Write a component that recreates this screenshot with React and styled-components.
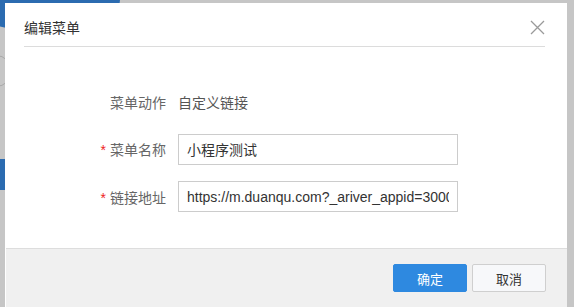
import React from "react";
import styled, { createGlobalStyle } from "styled-components";

const Global = createGlobalStyle`
  html, body { margin: 0; padding: 0; }
  body {
    width: 574px; height: 307px; overflow: hidden;
    font-family: "Liberation Sans", "Noto Sans CJK SC", Arial, sans-serif;
    background: #c6c6c6;
  }
`;

const Backdrop = styled.div`
  position: relative;
  width: 574px;
  height: 307px;
  overflow: hidden;
  background: #c6c6c6;
  box-sizing: border-box;
  padding: 3px 7px 0 5px;
`;

const Blob = styled.div`
  position: absolute;
  background: #2b6bb0;
`;

const Ring = styled.div`
  position: absolute;
  border: 1px solid #a9a9a9;
  border-radius: 50%;
`;

const Modal = styled.div`
  position: relative;
  z-index: 1;
  background: #fff;
  height: 320px;
  display: flex;
  flex-direction: column;
`;

const Header = styled.div`
  margin: 0 22px 0 19px;
  height: 43px;
  border-bottom: 1px solid #dcdcdc;
  display: flex;
  align-items: center;
  justify-content: space-between;
`;

const Title = styled.h3`
  margin: 0;
  font-size: 14px;
  font-weight: normal;
  color: #333;
  padding-top: 4px;
`;

const Close = styled.button`
  border: 0;
  background: none;
  padding: 0;
  width: 15px;
  height: 15px;
  display: flex;
  margin-top: 6px;
  cursor: pointer;
`;

const Body = styled.div`
  padding: 39px 0 36px;
  display: flex;
  flex-direction: column;
  gap: 16.5px;
`;

const Row = styled.div`
  display: flex;
  align-items: center;
  height: 31px;
  gap: 12px;
`;

const Label = styled.label`
  width: 161px;
  text-align: right;
  font-size: 14px;
  color: #666;
  font-family: "Noto Sans CJK SC", sans-serif;
`;

const Star = styled.span`
  color: #e22;
  margin-right: 4px;
  font-family: "Liberation Sans", sans-serif;
`;

const Value = styled.span`
  font-size: 14px;
  color: #555;
  font-family: "Noto Sans CJK SC", sans-serif;
`;

const Input = styled.input`
  box-sizing: border-box;
  width: 280px;
  height: 31px;
  border: 1px solid #ccc;
  padding: 0 8px;
  font-size: 14px;
  color: #333;
  font-family: "Liberation Sans", "Noto Sans CJK SC", sans-serif;
  outline: none;
  background: #fff;
`;

const Footer = styled.div`
  flex: 1;
  background: #f0f0f0;
  border-top: 1px solid #ddd;
  margin-left: 1px;
  padding: 15px 21px 0 0;
  display: flex;
  justify-content: flex-end;
  align-items: flex-start;
  gap: 5px;
`;

const Button = styled.button`
  width: 74px;
  height: 28px;
  border-radius: 2px;
  font-size: 13px;
  font-family: "Noto Sans CJK SC", sans-serif;
  cursor: pointer;
  border: 1px solid ${(p) => (p.$primary ? "#2e89e0" : "#cfcfcf")};
  background: ${(p) => (p.$primary ? "#2e89e0" : "#f7f8fa")};
  color: ${(p) => (p.$primary ? "#fff" : "#333")};
`;

export default function App() {
  return (
    <>
      <Global />
      <Backdrop>
        <Blob style={{ left: -20, top: -30, width: 140, height: 58, borderRadius: 30 }} />
        <Blob style={{ left: 0, top: 159, width: 8, height: 31 }} />
        <Ring style={{ left: -20, top: 55, width: 30, height: 30 }} />
        <Modal>
          <Header>
            <Title>编辑菜单</Title>
            <Close aria-label="close">
              <svg width="15" height="15" viewBox="0 0 15 15">
                <path d="M1 1L14 14M14 1L1 14" stroke="#9a9a9a" strokeWidth="1.3" fill="none" />
              </svg>
            </Close>
          </Header>
          <Body>
            <Row>
              <Label>菜单动作</Label>
              <Value>自定义链接</Value>
            </Row>
            <Row>
              <Label><Star>*</Star>菜单名称</Label>
              <Input defaultValue="小程序测试" />
            </Row>
            <Row>
              <Label><Star>*</Star>链接地址</Label>
              <Input defaultValue="https://m.duanqu.com?_ariver_appid=3000000012345678" />
            </Row>
          </Body>
          <Footer>
            <Button $primary>确定</Button>
            <Button>取消</Button>
          </Footer>
        </Modal>
      </Backdrop>
    </>
  );
}
